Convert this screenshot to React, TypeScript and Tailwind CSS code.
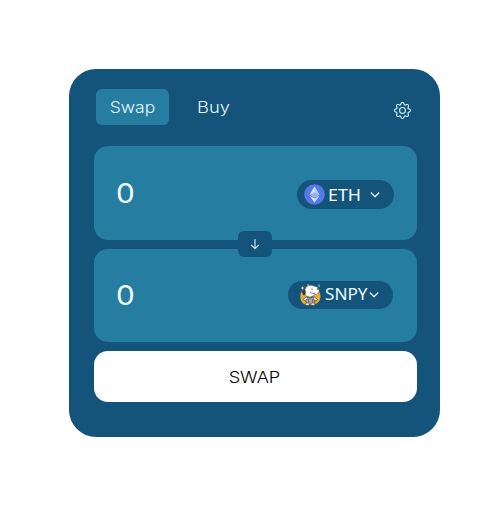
import React from "react";
import { BsGear } from "react-icons/bs";

function Chevron() {
  return (
    <svg className="shrink-0" width="10" height="6" viewBox="0 0 10 6" fill="none" stroke="#e8fbff" strokeWidth="1.3" strokeLinecap="round" strokeLinejoin="round">
      <path d="M1.2 1 5 4.7 8.8 1" />
    </svg>
  );
}

function EthIcon() {
  return (
    <svg className="shrink-0" width="21" height="21" viewBox="0 0 21 21">
      <circle cx="10.5" cy="10.5" r="10.3" fill="#5579e8" />
      <path d="m10.5 2.6-4.8 8 4.8 2.8 4.8-2.8Z" fill="#dce6ff" />
      <path d="m10.5 2.6 4.8 8-4.8 2.8Z" fill="#b8caff" />
      <path d="m10.5 8.4-4.8 2.2 4.8 2.8 4.8-2.8Z" fill="#9aafef" />
      <path d="m5.7 11.8 4.8 2.8 4.8-2.8-4.8 6.6Z" fill="#e8efff" />
      <path d="m10.5 14.6 4.8-2.8-4.8 6.6Z" fill="#b8caff" />
    </svg>
  );
}

function SnoopyIcon() {
  return (
    <svg className="shrink-0" width="23" height="24" viewBox="0 0 23 24" strokeLinecap="round" strokeLinejoin="round">
      <path d="M3.5 7.5C.8 10 .5 16 3.2 19.5c2 2.4 5 2.5 8.3 2.5 4 0 8-1.5 9.5-5.5 1-3 .5-7-2-9.5Z" fill="#e5ad38" />
      <path d="M2.5 3.5h5L11 2l5 1-1 7H3Z" fill="#4b5350" />
      <path d="M7.5 14c2-1.5 6-1.5 7.5 0l1 5-2 3H9.5L7 19Z" fill="#aaa59b" stroke="#3a3833" strokeWidth=".6" />
      <path d="M7.5 13.8 4 16.3l1.5 1.5L8 16.2m7.5-2.2 3 2.5L17 18l-2.500-1.600" fill="#f5f4ea" stroke="#3a3833" strokeWidth=".6" />
      <path d="M6.2 5.5C8 2.300 12.500 1.500 15.500 3.300c2.700.2 4.800 1.900 4.600 4.200-.2 2.900-2.500 4.500-5.100 4.300-1.700 2.700-6.300 2.800-8.200.4C5.200 10.400 5 7.700 6.200 5.500Z" fill="#fff" stroke="#4b5350" strokeWidth=".5" />
      <path d="M5.700 6.400c-1.900.6-2.600 3.400-1.800 5.200.7 1.400 2.200.5 2.600-1.100.3-1.600.3-3.200-.8-4.100Z" fill="#343331" />
      <ellipse cx="18.800" cy="6" rx="1" ry=".7" fill="#292c2d" />
      <path d="M13 5.800v.8m3 3.500c-1.700.6-3.400.4-4.500-.6" fill="none" stroke="#282b2d" strokeWidth=".7" />
      <path d="m8.500 14.300 2.500.8 2.500-.8" fill="none" stroke="#594032" strokeWidth=".9" />
      <path d="M9.700 16.500V19m4-2.500V19" stroke="#5f554b" strokeWidth=".8" />
      <ellipse cx="8.500" cy="21.200" rx="2.200" ry="1.400" fill="#e9e5dc" stroke="#3a3833" strokeWidth=".6" />
      <ellipse cx="14" cy="21.200" rx="2.200" ry="1.400" fill="#e9e5dc" stroke="#3a3833" strokeWidth=".6" />
      <path d="M3.500 4v2M2.500 5h2M9 1.500V3M20 2v1.500" stroke="#fff" strokeWidth=".8" />
    </svg>
  );
}

export default function App() {
  return (
    <main className="h-[506px] w-[493px] bg-white pl-[69px] pt-[69px] font-['Inter',sans-serif]">
      <section className="h-[368px] w-[371px] rounded-[27px] bg-[#14547a] px-[25px] pt-5 text-[#e6f7fa]">
        <header className="flex h-[57px] items-start pl-[1.5px]">
          <button className="flex h-[36px] w-[73.5px] items-center justify-center rounded-md bg-[#257da2] pt-[1px] text-[16.5px] font-light leading-none"><span className="inline-block scale-x-[1.06]">Swap</span></button>
          <button className="ml-[28px] h-[36px] pt-[1px] text-[16.5px] font-light leading-none"><span className="inline-block origin-left scale-x-[1.11]">Buy</span></button>
          <BsGear className="ml-auto mr-1 mt-[13px] text-[#d5f5ff]" size={17} />
        </header>
        <div className="flex h-[94px] w-[323px] justify-between rounded-[14px] bg-[#257da2] pl-[22px] pr-[23px]">
          <span className="mt-[34px] origin-left scale-x-110 text-[27px] leading-7 text-[#f4ffff]">0</span>
          <button className="mt-[34px] flex h-[29px] w-[97px] items-center rounded-full bg-[#14547a] pl-[7px]">
            <EthIcon />
            <span className="-mt-[1px] ml-[3px] w-[42px] text-left font-['Noto_Sans',sans-serif] text-[17px] leading-none text-[#f4ffff]"><span className="inline-block origin-left scale-x-[1.05]">ETH</span></span>
            <Chevron />
          </button>
        </div>
        <div className="relative z-10 -my-[9px] flex h-[27px] justify-center">
          <button className="flex h-[26px] w-[34px] items-center justify-center rounded-md bg-[#14547a]">
            <svg width="10" height="12" viewBox="0 0 10 12" fill="none" stroke="#c9e5ec" strokeWidth="1.2" strokeLinecap="round" strokeLinejoin="round"><path d="M5 1.5v9M1.5 7.3 5 10.6l3.5-3.300" /></svg>
          </button>
        </div>
        <div className="flex h-[93px] w-[323px] justify-between rounded-[14px] bg-[#257da2] pl-[22px] pr-6">
          <span className="mt-[33px] origin-left scale-x-110 text-[27px] leading-7 text-[#f4ffff]">0</span>
          <button className="mt-8 flex h-7 w-[105px] items-center rounded-full bg-[#14547a] pb-[1px] pl-[11px]">
            <SnoopyIcon />
            <span className="ml-[3px] w-[44px] whitespace-nowrap text-left font-['Noto_Sans',sans-serif] text-[16.5px] leading-none text-[#e8fbff]"><span className="inline-block origin-left scale-x-[1.04]">SNPY</span></span>
            <Chevron />
          </button>
        </div>
        <button className="mt-[9px] h-[50.5px] w-[323px] rounded-[14px] bg-white pt-[2px] text-[16.5px] font-light text-black"><span className="inline-block -translate-x-[1px] scale-x-[1.1]">SWAP</span></button>
      </section>
    </main>
  );
}
